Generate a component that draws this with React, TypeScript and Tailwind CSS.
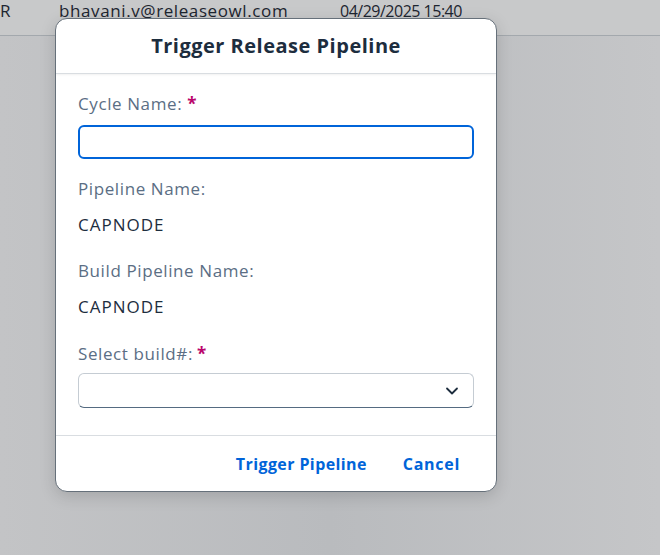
export default function App() {
  const font = { fontFamily: '"Open Sans", "Liberation Sans", Arial, sans-serif' };
  return (
    <div
      className="relative h-[555px] w-[660px] overflow-hidden bg-gradient-to-r from-[#c3c4c6] via-[#b9bbbe] to-[#c5c6c8]"
      style={font}
    >
      {/* table row behind the overlay */}
      <div className="flex h-[36px] items-start overflow-hidden border-b border-[#a3a8ad] bg-[#c8c9ca] pt-[1px] text-[17px] leading-[20px] text-[#1d2530]">
        <span className="w-[59px] shrink-0">R</span>
        <span className="w-[281px] shrink-0 tracking-[0.6px]">bhavani.v@releaseowl.com</span>
        <span className="text-[16px] tracking-[-0.5px]">04/29/2025 15:40</span>
      </div>

      {/* dialog */}
      <div className="absolute left-[55px] top-[18px] flex w-[442px] flex-col overflow-hidden rounded-[12px] border border-[#66707a] bg-white shadow-[0_4px_16px_rgba(0,0,0,0.15)]">
        <header className="flex h-[55px] items-center justify-center border-b border-[#d9dde1] shadow-[0_1px_2px_rgba(0,0,0,0.06)]">
          <h1 className="text-[20px] font-bold tracking-[0.5px] text-[#1d2d3e]">Trigger Release Pipeline</h1>
        </header>

        <div className="flex flex-col px-[22px] pt-[19px] pb-[27px]">
          <label className="text-[17px] leading-[22px] tracking-[0.6px] text-[#5b6e84]">
            Cycle Name:<span className="ml-[5px] font-bold text-[#ba066c]">*</span>
          </label>
          <input
            type="text"
            className="mt-[10px] h-[34px] w-full rounded-[6px] border-2 border-[#0064d9] bg-white px-2 outline-none"
          />

          <div className="mt-[19px] text-[17px] leading-[22px] tracking-[0.6px] text-[#5b6e84]">Pipeline Name:</div>
          <div className="mt-[14px] text-[17px] leading-[22px] tracking-[1px] text-[#1d2d3e]">CAPNODE</div>

          <div className="mt-[24px] text-[17px] leading-[22px] tracking-[0.6px] text-[#5b6e84]">Build Pipeline Name:</div>
          <div className="mt-[14px] text-[17px] leading-[22px] tracking-[1px] text-[#1d2d3e]">CAPNODE</div>

          <label className="mt-[25px] text-[17px] leading-[22px] tracking-[0.6px] text-[#5b6e84]">
            Select build#:<span className="ml-[4px] font-bold text-[#ba066c]">*</span>
          </label>
          <div className="mt-[8px] flex h-[35px] w-full items-center justify-end rounded-[6px] border border-[#c5ccd3] border-b-[#556b81] bg-white pr-[14px]">
            <svg width="14" height="14" viewBox="0 0 14 14" fill="none">
              <path d="M2 4.5 L7 9.5 L12 4.5" stroke="#1d2d3e" strokeWidth="1.8" strokeLinecap="round" strokeLinejoin="round" />
            </svg>
          </div>
        </div>

        <footer className="flex h-[56px] items-center justify-end gap-[36px] border-t border-[#d9dde1] pr-[36px]">
          <button type="button" className="text-[16px] font-bold tracking-[0.4px] text-[#0064d9]">Trigger Pipeline</button>
          <button type="button" className="text-[16px] font-bold tracking-[0.7px] text-[#0064d9]">Cancel</button>
        </footer>
      </div>
    </div>
  );
}
